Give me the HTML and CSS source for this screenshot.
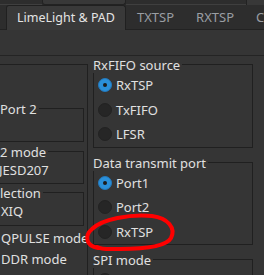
FILE: index.html
```html
<!DOCTYPE html>
<html lang="en">
<head>
    <meta charset="UTF-8">
    <title>LimeLight &amp; PAD</title>
    <link rel="stylesheet" href="styles.css">
</head>
<body>
    <div class="top-strip">
        <div class="strip-a"></div>
        <div class="strip-b"></div>
        <div class="strip-c"></div>
        <div class="strip-d"></div>
    </div>
    <div class="tabbar">
        <div class="tab active">LimeLight &amp; PAD</div>
        <div class="tab">TXTSP</div>
        <div class="tab">RXTSP</div>
        <div class="tab">CDS</div>
    </div>
    <div class="pane">
        <div class="scroll">
            <div class="left-col">
                <div class="group outer">
                    <div class="group inner port2">
                        <div class="group-title">Port 2</div>
                    </div>
                    <div class="group inner mode">
                        <div class="group-title">2 mode</div>
                        <div class="left-row shift">JESD207</div>
                    </div>
                    <div class="group inner sel">
                        <div class="group-title">lection</div>
                        <div class="left-row">XIQ</div>
                    </div>
                    <div class="left-row check">QPULSE mode</div>
                    <div class="left-row check">DDR mode</div>
                </div>
            </div>
            <div class="right-col">
                <div class="group">
                    <div class="group-title">RxFIFO source</div>
                    <label class="option"><span class="radio checked"></span>RxTSP</label>
                    <label class="option"><span class="radio"></span>TxFIFO</label>
                    <label class="option"><span class="radio"></span>LFSR</label>
                </div>
                <div class="group">
                    <div class="group-title">Data transmit port</div>
                    <label class="option"><span class="radio checked"></span>Port1</label>
                    <label class="option"><span class="radio"></span>Port2</label>
                    <label class="option"><span class="radio"></span>RxTSP</label>
                </div>
                <div class="group">
                    <div class="group-title">SPI mode</div>
                    <label class="option"><span class="radio"></span>3-wire</label>
                </div>
            </div>
        </div>
    </div>

    <!-- hand-drawn highlight over the RxTSP option -->
    <svg class="marker" width="264" height="275" viewBox="0 0 264 275">
        <path d="M 98 248 C 86 246, 84 236, 92 229 C 102 219, 130 214, 152 216 C 168 218, 176 228, 171 238 C 166 247, 140 249, 120 249 C 110 249, 102 250, 97 247"
              fill="none" stroke="#f00" stroke-width="4" stroke-linecap="round"/>
    </svg>
</body>
</html>
```

FILE: styles.css
```css
* {
    margin: 0;
    padding: 0;
    box-sizing: border-box;
}

body {
    width: 264px;
    height: 275px;
    overflow: hidden;
    position: relative;
    background: #353535;
    font-family: 'Noto Sans', sans-serif;
    font-size: 13px;
    color: #e0e0e0;
}

.top-strip {
    height: 5px;
    display: flex;
    background: #2d2d2d;
}

.strip-a {
    width: 42px;
    border-bottom: 1px solid #3f3f3f;
}

.strip-b {
    width: 84px;
    background: #383838;
    border: 1px solid #222;
    border-top: none;
    border-radius: 0 0 3px 3px;
}

.strip-c {
    width: 120px;
    border-bottom: 1px solid #3f3f3f;
}

.strip-d {
    flex: 1;
    border-left: 1px solid #222;
    background: #383838;
}

.tabbar {
    height: 25px;
    display: flex;
    background: #2d2d2d;
    white-space: nowrap;
    overflow: hidden;
}

.tab {
    flex-shrink: 0;
    padding: 0 11px;
    line-height: 25px;
    color: #9a9ea3;
}

.tab.active {
    width: 120px;
    margin-left: 6px;
    padding: 0;
    text-align: center;
    font-size: 12.5px;
    color: #e4e4e4;
    background: #393939;
    border: 1px solid #202020;
    border-bottom: none;
    border-radius: 3px 3px 0 0;
    line-height: 24px;
    position: relative;
    z-index: 1;
}

.pane {
    border-top: 1px solid #222;
    margin-top: -1px;
}

.scroll {
    margin-top: 25px;
    border-top: 1px solid #242424;
    padding-top: 8px;
    display: flex;
    align-items: flex-start;
    gap: 5px;
}

.group {
    border: 1px solid #202020;
}

.group-title {
    width: max-content;
    margin: -8px 0 0 -1px;
    padding-right: 2px;
    height: 16px;
    line-height: 16px;
    background: #353535;
    white-space: nowrap;
}

.left-col {
    width: 98px;
    margin-left: -10px;
}

.group.outer {
    height: 220px;
    padding: 43px 3px 0 0;
    border-bottom: none;
}

.group.inner {
    margin-left: -1px;
}

.group.inner .group-title {
    padding-left: 10px;
}

.port2 {
    height: 34px;
}

.mode {
    margin-top: 9px;
    height: 33px;
}

.sel {
    margin-top: 8px;
    height: 34px;
}

.left-row {
    padding-left: 10px;
    height: 20px;
    line-height: 20px;
    white-space: nowrap;
}

.left-row.shift {
    padding-left: 8px;
}

.left-row.check {
    height: 21px;
    line-height: 21px;
    margin-top: 2px;
}

.left-row.check + .left-row.check {
    margin-top: 0;
}

.right-col {
    width: 160px;
    display: flex;
    flex-direction: column;
    gap: 14px;
}

.option {
    display: flex;
    align-items: center;
    height: 24.5px;
    padding-left: 4px;
    white-space: nowrap;
}

.radio {
    width: 14px;
    height: 14px;
    margin-right: 4px;
    border-radius: 50%;
    background: #262626;
    border: 1px solid #222;
    position: relative;
}

.radio.checked {
    background: #2a90da;
    border-color: #2378bb;
}

.radio.checked::after {
    content: '';
    position: absolute;
    left: 4px;
    top: 4px;
    width: 4px;
    height: 4px;
    border-radius: 50%;
    background: #1c1c1c;
}

.marker {
    position: absolute;
    left: 0;
    top: 0;
    pointer-events: none;
}
```
